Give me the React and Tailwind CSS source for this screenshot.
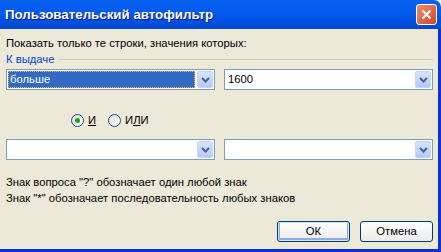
import React from "react";

function Chevron() {
  return (
    <svg width="9" height="6" viewBox="0 0 9 6" className="block">
      <path d="M1 1 L4.5 4.5 L8 1" stroke="#4D6185" strokeWidth="2" fill="none" />
    </svg>
  );
}

function Combo({ children }) {
  return (
    <div className="flex h-[21px] w-[209px] items-stretch border border-[#7F9DB9] bg-white p-[1px]">
      <div className="flex flex-1 items-center pr-[2px]">{children}</div>
      <div className="flex w-[16px] items-center justify-center rounded-[2px] border border-[#C3D3FD] bg-gradient-to-b from-[#D6E3FE] to-[#B4C9F8]">
        <Chevron />
      </div>
    </div>
  );
}

function Radio({ checked }) {
  return (
    <div className="flex h-[13px] w-[13px] items-center justify-center rounded-full border border-[#1C5180] bg-gradient-to-br from-[#DCDCD7] to-white">
      {checked && <div className="h-[5px] w-[5px] rounded-full bg-[#21A121]" />}
    </div>
  );
}

export default function App() {
  return (
    <div
      className="flex h-[252px] w-[441px] flex-col overflow-hidden text-[11.25px] leading-[13px] text-black"
      style={{ fontFamily: '"Liberation Sans", Arial, sans-serif' }}
    >
      <div className="flex h-[29px] items-center justify-between rounded-tr-[7px] bg-gradient-to-b from-[#0A62F0] via-[#0058EE] to-[#0048D0] pl-[5px] pr-[4px]">
        <div className="text-[13.3px] font-bold leading-[16px] text-white [text-shadow:1px_1px_0_#0A1883]">
          Пользовательский автофильтр
        </div>
        <div className="flex h-[21px] w-[21px] items-center justify-center rounded-[3px] border border-white bg-gradient-to-br from-[#EB8D6E] to-[#D2451F]">
          <svg width="11" height="11" viewBox="0 0 11 11">
            <path d="M1.5 1.5 L9.5 9.5 M9.5 1.5 L1.5 9.5" stroke="white" strokeWidth="2" />
          </svg>
        </div>
      </div>
      <div className="flex flex-1 flex-col border-b-[3px] border-r-[3px] border-[#0831D9] bg-[#ECE9D8] pl-[6px] pr-[5px]">
        <div className="mt-[8px] h-[13px]">Показать только те строки, значения которых:</div>
        <div className="mt-[3px] flex h-[13px] items-center gap-[5px]">
          <span className="text-[#0046D5]">К выдаче</span>
          <div className="h-[1px] flex-1 bg-[#D0D0BF]" />
        </div>
        <div className="mt-[3px] flex gap-[9px]">
          <Combo>
            <div className="flex h-[17px] flex-1 items-center border border-dotted border-[#F6B544] bg-[#316AC5] pl-[1px] text-white">
              больше
            </div>
          </Combo>
          <Combo>
            <div className="pl-[2px]">1600</div>
          </Combo>
        </div>
        <div className="ml-[65px] mt-[24px] flex h-[13px] items-center">
          <Radio checked />
          <span className="ml-[4px] underline">И</span>
          <div className="ml-[12px]">
            <Radio />
          </div>
          <span className="ml-[4px]">
            И<span className="underline">Л</span>И
          </span>
        </div>
        <div className="mt-[12px] flex gap-[9px]">
          <Combo />
          <Combo />
        </div>
        <div className="mt-[16px] h-[13px]">Знак вопроса "?" обозначает один любой знак</div>
        <div className="mt-[3px] h-[13px]">Знак "*" обозначает последовательность любых знаков</div>
        <div className="mt-[16px] flex justify-end gap-[10px]">
          <div className="flex h-[21px] w-[73px] items-center justify-center rounded-[3px] border border-[#003C74] bg-gradient-to-b from-white to-[#ECEBE6] shadow-[inset_0_0_0_1px_#CEE7FF,inset_0_-1px_0_2px_#89ADE4]">
            ОК
          </div>
          <div className="flex h-[21px] w-[73px] items-center justify-center rounded-[3px] border border-[#003C74] bg-gradient-to-b from-white to-[#ECEBE6]">
            Отмена
          </div>
        </div>
      </div>
    </div>
  );
}
